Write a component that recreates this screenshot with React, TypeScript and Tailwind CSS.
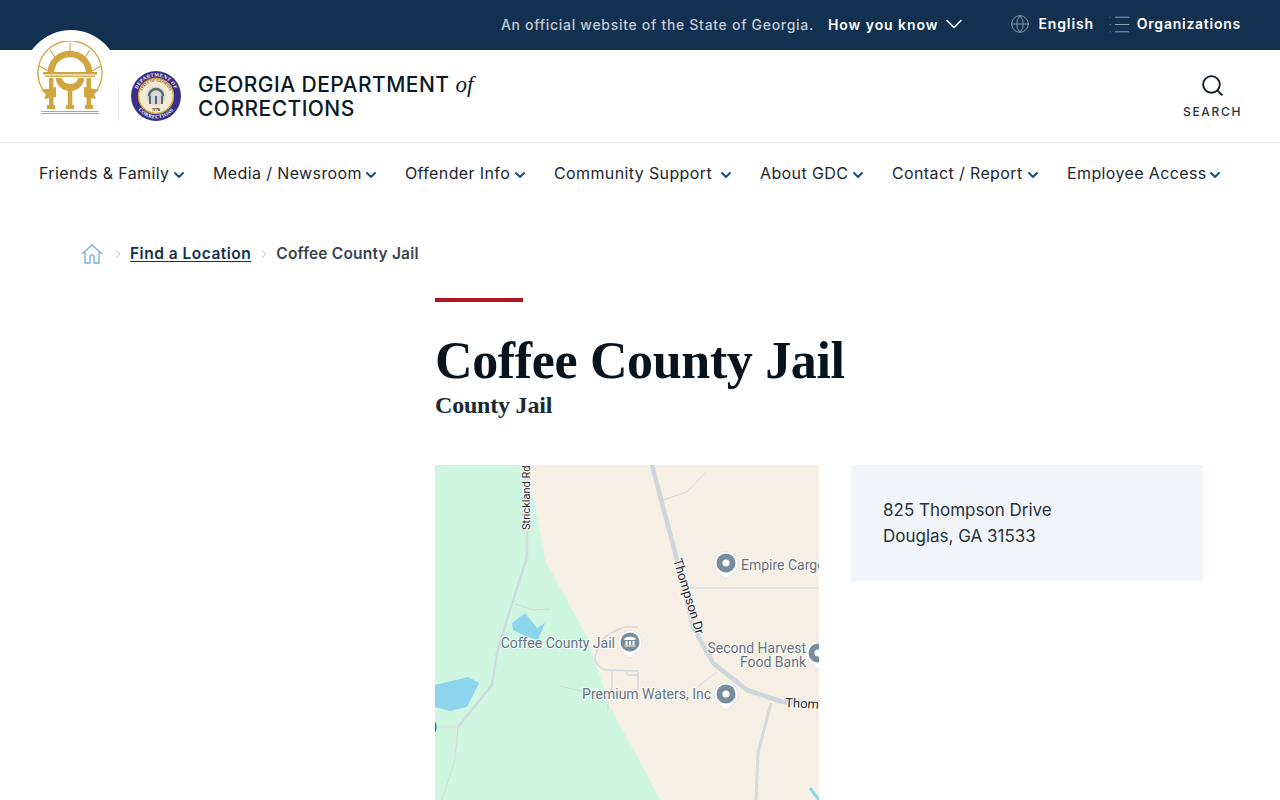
import { ChevronDown, ChevronRight, Globe, List, Search } from 'lucide-react';

const sans = { fontFamily: 'Inter, sans-serif' };
const serif = { fontFamily: '"Liberation Serif", serif' };

const navItems = [
  { label: 'Friends & Family', width: 'w-[148px]' },
  { label: 'Media / Newsroom', width: 'w-[166px]' },
  { label: 'Offender Info', width: 'w-[123px]' },
  { label: 'Community Support', width: 'w-[180px]' },
  { label: 'About GDC', width: 'w-[106px]' },
  { label: 'Contact / Report', width: 'w-[149px]' },
  { label: 'Employee Access', width: 'w-[154px]' },
];

function StateLogo() {
  const gold = '#cfa63f';
  return (
    <svg width="68" height="76" viewBox="0 0 68 76" fill="none">
      <path d="M7 49 A32 32 0 1 1 61 49" stroke={gold} strokeWidth="1.3" />
      <path d="M34 2 V12 M14 9 L21 19 M54 9 L47 19 M3 25 L12 30 M65 25 L56 30" stroke={gold} strokeWidth="1.1" />
      <path d="M15 31 A19 18 0 0 1 53 31" stroke={gold} strokeWidth="6.5" />
      <rect x="7" y="31" width="54" height="2.4" fill={gold} />
      <rect x="9" y="34.5" width="50" height="1.4" fill={gold} />
      <path d="M20 37 H48 A14 13 0 0 1 20 37 Z M26 37 A8 6 0 0 0 42 37 Z" fill={gold} fillRule="evenodd" />
      <rect x="13" y="37" width="4.5" height="29" fill={gold} />
      <rect x="31.8" y="47" width="4.5" height="19" fill={gold} />
      <rect x="50.5" y="37" width="4.5" height="29" fill={gold} />
      <path d="M5 49 L20 46 V56 L8 58 L10 53 Z M63 49 L48 46 V56 L60 58 L58 53 Z" fill={gold} />
      <rect x="11" y="64" width="8" height="4" fill={gold} />
      <rect x="30" y="64" width="8" height="4" fill={gold} />
      <rect x="49" y="64" width="8" height="4" fill={gold} />
      <rect x="5" y="70" width="58" height="1" fill={gold} />
      <rect x="5" y="72" width="58" height="1" fill={gold} />
    </svg>
  );
}

function Seal() {
  return (
    <svg width="52" height="52" viewBox="0 0 52 52">
      <defs>
        <path id="seal-top" d="M6.5 26 A19.5 19.5 0 0 1 45.5 26" />
        <path id="seal-bottom" d="M3.5 26 A22.5 22.5 0 0 0 48.5 26" />
        <path id="seal-inner" d="M11.5 26 A14.5 14.5 0 0 1 40.5 26" />
      </defs>
      <circle cx="26" cy="26" r="25" fill="#3a2f86" />
      <circle cx="26" cy="26" r="17.5" fill="#f4ecd2" stroke="#c9a545" strokeWidth="1.5" />
      <text fontSize="5" fontWeight="700" fill="#ffffff" fontFamily="'Liberation Serif', serif" letterSpacing="0.3">
        <textPath href="#seal-top" startOffset="50%" textAnchor="middle">DEPARTMENT OF</textPath>
      </text>
      <text fontSize="5" fontWeight="700" fill="#ffffff" fontFamily="'Liberation Serif', serif" letterSpacing="0.3">
        <textPath href="#seal-bottom" startOffset="50%" textAnchor="middle">CORRECTIONS</textPath>
      </text>
      <text fontSize="3.6" fontWeight="700" fill="#a8462f" fontFamily="'Liberation Serif', serif">
        <textPath href="#seal-inner" startOffset="50%" textAnchor="middle">STATE OF GEORGIA</textPath>
      </text>
      <circle cx="26" cy="26" r="9.5" fill="#d6d8d9" />
      <path d="M19 26 A7 7 0 0 1 33 26" fill="none" stroke="#5f6b72" strokeWidth="2.5" />
      <path d="M20 26 V34 M26 26 V34 M32 26 V34" stroke="#4d585f" strokeWidth="1.8" />
      <text x="26" y="40.5" textAnchor="middle" fontSize="3.6" fontWeight="700" fill="#333">1776</text>
    </svg>
  );
}

function HomeIcon() {
  return (
    <svg width="22" height="20" viewBox="0 0 22 20" fill="none" stroke="#79ade0" strokeWidth="1.4" className="shrink-0">
      <path d="M1 10 L11 1 L21 10" />
      <path d="M4 8 V19 H9 V13 A2 2 0 0 1 13 13 V19 H18 V8" />
    </svg>
  );
}

function Pin({ x, y }: { x: number; y: number }) {
  return (
    <g transform={`translate(${x} ${y})`}>
      <path d="M0 16 L-8.5 9 A12 12 0 1 1 8.5 9 Z" fill="#ffffff" stroke="#d5d9dc" strokeWidth="0.6" />
      <circle r="9.5" fill="#778d9c" />
      <circle r="3.6" fill="#ffffff" />
    </g>
  );
}

function MapLabel({ x, y, anchor, children }: { x: number; y: number; anchor?: 'end'; children: string }) {
  return (
    <text
      x={x}
      y={y}
      textAnchor={anchor}
      fontSize="14"
      fill="#67737f"
      stroke="#ffffff"
      strokeWidth="2"
      strokeOpacity="0.7"
      paintOrder="stroke"
      fontFamily="Roboto, sans-serif"
    >
      {children}
    </text>
  );
}

function RoadLabel({ transform, size, children }: { transform: string; size: number; children: string }) {
  return (
    <text
      transform={transform}
      fontSize={size}
      fill="#1f2429"
      stroke="#ffffff"
      strokeWidth="2"
      paintOrder="stroke"
      fontFamily="Roboto, sans-serif"
    >
      {children}
    </text>
  );
}

function MapView() {
  return (
    <svg width="384" height="335" viewBox="0 0 384 335" className="block shrink-0">
      <rect width="384" height="335" fill="#f5efe4" />
      <path d="M0 0 H88 L100 40 L110 95 L152 172 L175 242 L208 302 L225 335 H0 Z" fill="#cff6e1" />
      <path d="M77 158 L90 148 L102 163 L110 158 L103 175 L92 172 L78 165 Z" fill="#8dd5ee" />
      <path d="M0 220 L33 212 L44 218 L32 242 L15 246 L0 242 Z" fill="#8dd5ee" />
      <path d="M375 323 L384 335" stroke="#8dd5ee" strokeWidth="3" fill="none" />
      <g fill="none" stroke="#d3dadf" strokeLinejoin="round">
        <path d="M92 0 V92 L75 145 L62 188 L57 220 L23 262" strokeWidth="2.5" />
        <path d="M23 262 H0 M23 262 L20 295 L7 335" strokeWidth="1" />
        <path d="M217 0 L242 95 L258 162 L278 198 L312 225 L348 237 L384 238" strokeWidth="4.5" stroke="#ced7dd" />
        <path d="M336 238 L323 288 L321 335" strokeWidth="3" />
        <path d="M228 35 L252 27 L270 8 M253 123 H384 M80 139 L98 145 L115 144 M125 221 L173 232 L173 245 M262 222 L282 207" strokeWidth="1" />
        <path d="M203 162 H192 Q185 162 170 172 Q160 185 160 195 Q165 205 172 205 L203 206 V225 M177 205 V232 M190 205 L193 210 H203" strokeWidth="1.4" />
      </g>
      <RoadLabel transform="translate(95 65) rotate(-90)" size={11}>Strickland Rd</RoadLabel>
      <RoadLabel transform="translate(238 95) rotate(73)" size={13}>Thompson Dr</RoadLabel>
      <RoadLabel transform="translate(350 242) rotate(3)" size={13}>Thompson Dr</RoadLabel>
      <text x="-2" y="266" fontSize="12" fill="#2d3238" fontFamily="Roboto, sans-serif">)</text>
      <Pin x={291} y={98} />
      <Pin x={383} y={188} />
      <Pin x={291} y={229} />
      <g transform="translate(195 177)">
        <path d="M0 16 L-8.5 9 A12 12 0 1 1 8.5 9 Z" fill="#ffffff" stroke="#d5d9dc" strokeWidth="0.6" />
        <circle r="9.5" fill="#778d9c" />
        <path d="M-5.5 -2 H5.5 V-4 L0 -5.5 L-5.5 -4 Z M-4.5 -1 H-2.5 V3 H-4.5 Z M-1 -1 H1 V3 H-1 Z M2.5 -1 H4.5 V3 H2.5 Z M-5.5 3.5 H5.5 V4.5 H-5.5 Z" fill="#ffffff" />
      </g>
      <MapLabel x={306} y={105}>Empire Cargo</MapLabel>
      <MapLabel x={180} y={183} anchor="end">Coffee County Jail</MapLabel>
      <MapLabel x={371} y={188} anchor="end">Second Harvest</MapLabel>
      <MapLabel x={371} y={202} anchor="end">Food Bank</MapLabel>
      <MapLabel x={276} y={234} anchor="end">Premium Waters, Inc</MapLabel>
    </svg>
  );
}

export default function App() {
  return (
    <div className="relative h-[800px] overflow-hidden bg-white" style={sans}>
      <div className="flex h-[50px] items-center justify-end bg-[#12304f] pb-[2px] pr-[39px] text-[14px] font-medium">
        <span className="tracking-[0.7px] text-[#c3cbd5]">An official website of the State of Georgia.</span>
        <span className="ml-[14px] font-semibold tracking-[0.95px] text-white">How you know</span>
        <ChevronDown className="ml-[1px] shrink-0 text-white" size={28} strokeWidth={1.4} />
        <Globe className="ml-[42px] shrink-0 text-[#9aa7b5]" size={20} strokeWidth={1} />
        <span className="mb-[2px] ml-[9px] font-semibold tracking-[0.85px] text-white">English</span>
        <List className="ml-[13px] shrink-0 text-[#9aa7b5]" size={25} strokeWidth={0.9} />
        <span className="mb-[2px] ml-[5px] font-semibold tracking-[0.75px] text-white">Organizations</span>
      </div>

      <div className="absolute left-[23px] top-[30px] flex h-[96px] w-[96px] justify-center rounded-full bg-white pr-[2px] pt-[11px]">
        <StateLogo />
      </div>

      <header className="flex h-[93px] items-center border-b border-[#e2e4e7] pl-[118px] pr-[38px]">
        <div className="flex items-center">
          <div className="h-[50px] w-px bg-[#e8e8e8]" />
          <div className="ml-[11px]"><Seal /></div>
          <div className="ml-[16px] pt-[2px] text-[21px] font-medium leading-[24px] tracking-[0.45px] text-[#0b1a26]">
            <div>
              GEORGIA DEPARTMENT{' '}
              <span className="text-[23px] italic tracking-normal" style={serif}>of</span>
            </div>
            <div>CORRECTIONS</div>
          </div>
        </div>
        <div className="ml-auto flex flex-col items-center">
          <Search className="text-[#0f1c28]" size={25} strokeWidth={1.8} />
          <span className="mt-[6px] text-[12px] font-medium leading-[16px] tracking-[1.65px] text-[#26313b]">SEARCH</span>
        </div>
      </header>

      <nav className="flex h-[61px] items-center gap-[26px] pb-[2px] pl-[39px] text-[16px] tracking-[0.38px] text-[#1c2630]">
        {navItems.map((item) => (
          <div key={item.label} className={`flex shrink-0 items-center justify-between ${item.width}`}>
            <span className="whitespace-nowrap">{item.label}</span>
            <ChevronDown className="mt-[4px] shrink-0 text-[#14527f]" size={16} strokeWidth={3} />
          </div>
        ))}
      </nav>

      <div className="mt-[38px] flex h-[24px] items-center pl-[81px] text-[15.5px] font-semibold">
        <HomeIcon />
        <ChevronRight className="ml-[8px] shrink-0 text-[#a9b4bf]" size={14} strokeWidth={1.5} />
        <a className="ml-[5px] tracking-[0.5px] text-[#12304f] underline underline-offset-2">Find a Location</a>
        <ChevronRight className="ml-[6px] shrink-0 text-[#a9b4bf]" size={14} strokeWidth={1.5} />
        <span className="ml-[5px] tracking-[0.2px] text-[#39424c]">Coffee County Jail</span>
      </div>

      <main className="ml-[435px] mt-[32px] w-[768px]">
        <div className="h-[4px] w-[88px] bg-[#ae1620]" />
        <h1 className="mt-[29px] text-[52px] font-bold leading-[60px] tracking-[-0.35px] text-[#07141e]" style={serif}>
          Coffee County Jail
        </h1>
        <h2 className="-mt-[1px] text-[24px] font-bold leading-[30px] tracking-[-0.2px] text-[#1b2933]" style={serif}>
          County Jail
        </h2>
        <div className="mt-[45px] flex items-start gap-[32px]">
          <MapView />
          <div className="w-[352px] bg-[#f2f6fa] p-[32px] text-[17px] leading-[26px] text-[#27323c]">
            <div>825 Thompson Drive</div>
            <div>Douglas, GA 31533</div>
          </div>
        </div>
      </main>
    </div>
  );
}
